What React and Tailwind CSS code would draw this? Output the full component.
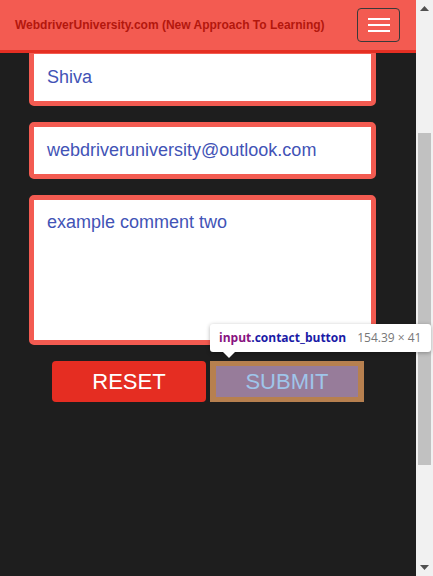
import React from "react";

export default function App() {
  return (
    <div className="relative flex w-[433px] h-[576px] overflow-hidden bg-[#1e1e1e] font-['Liberation_Sans',Arial,sans-serif]">
      <div className="w-[416px] flex flex-col">
        <nav className="h-[53px] shrink-0 bg-[#f35b51] border-b-[3px] border-[#e52f23] flex items-center justify-between pl-[15px] pr-[16px]">
          <span className="text-[12px] font-bold text-[#b3170d] leading-none">
            WebdriverUniversity.com (New Approach To Learning)
          </span>
          <button className="w-[43px] h-[34px] border border-[#3a3a3a] rounded-[4px] flex flex-col items-center justify-center gap-[4px]">
            <span className="block w-[22px] h-[2px] bg-white" />
            <span className="block w-[22px] h-[2px] bg-white" />
            <span className="block w-[22px] h-[2px] bg-white" />
          </button>
        </nav>
        <div className="flex-1 overflow-hidden">
          <div className="ml-[29px] w-[347px] flex flex-col gap-[16px] -mt-[4px]">
            <div className="h-[57px] bg-white border-[5px] border-[#f35b51] rounded-[5px] flex items-center pl-[13px] text-[18px] text-[#4253b6]">
              Shiva
            </div>
            <div className="h-[57px] bg-white border-[5px] border-[#f35b51] rounded-[5px] flex items-center pl-[13px] text-[18px] text-[#4253b6]">
              webdriveruniversity@outlook.com
            </div>
            <div className="h-[150px] bg-white border-[5px] border-[#f35b51] rounded-[5px] pl-[13px] pt-[12px] text-[18px] leading-[21px] text-[#4253b6]">
              example comment two
            </div>
          </div>
          <div className="flex justify-center gap-[4px] mt-[16px]">
            <div className="w-[154px] h-[41px] bg-[#e52d22] rounded-[4px] flex items-center justify-center text-[22px] text-white">
              RESET
            </div>
            <div className="w-[154px] h-[41px] bg-[#977c9a] border-y-[5px] border-x-[6px] border-[#b7804f] flex items-center justify-center text-[22px] text-[#9fc5ea]">
              SUBMIT
            </div>
          </div>
        </div>
      </div>
      <div className="w-[17px] bg-[#f1f1f1] flex flex-col items-center">
        <div className="h-[17px] flex items-center justify-center">
          <svg width="9" height="5" viewBox="0 0 9 5"><path d="M0 5 L4.5 0 L9 5 Z" fill="#505050" /></svg>
        </div>
        <div className="mt-[116px] w-[13px] h-[332px] bg-[#c1c1c1]" />
        <div className="flex-1" />
        <div className="h-[17px] flex items-center justify-center">
          <svg width="9" height="5" viewBox="0 0 9 5"><path d="M0 0 L4.5 5 L9 0 Z" fill="#505050" /></svg>
        </div>
      </div>
      <div className="absolute left-[210px] top-[324px] w-[221px] h-[28px] bg-white rounded-[3px] shadow-[0_1px_4px_rgba(0,0,0,0.3)] flex items-center pl-[9px] gap-[11px] font-['Open_Sans',Arial,sans-serif] text-[12px]">
        <span className="font-bold">
          <span className="text-[#881280]">input</span>
          <span className="text-[#1a1aa6]">.contact_button</span>
        </span>
        <span className="text-[#777]">154.39 × 41</span>
        <svg className="absolute top-[27px]" width="14" height="8" viewBox="0 0 14 8" style={{ left: 12 }}>
          <path d="M0 0 L7 7 L14 0 Z" fill="white" />
        </svg>
      </div>
    </div>
  );
}
